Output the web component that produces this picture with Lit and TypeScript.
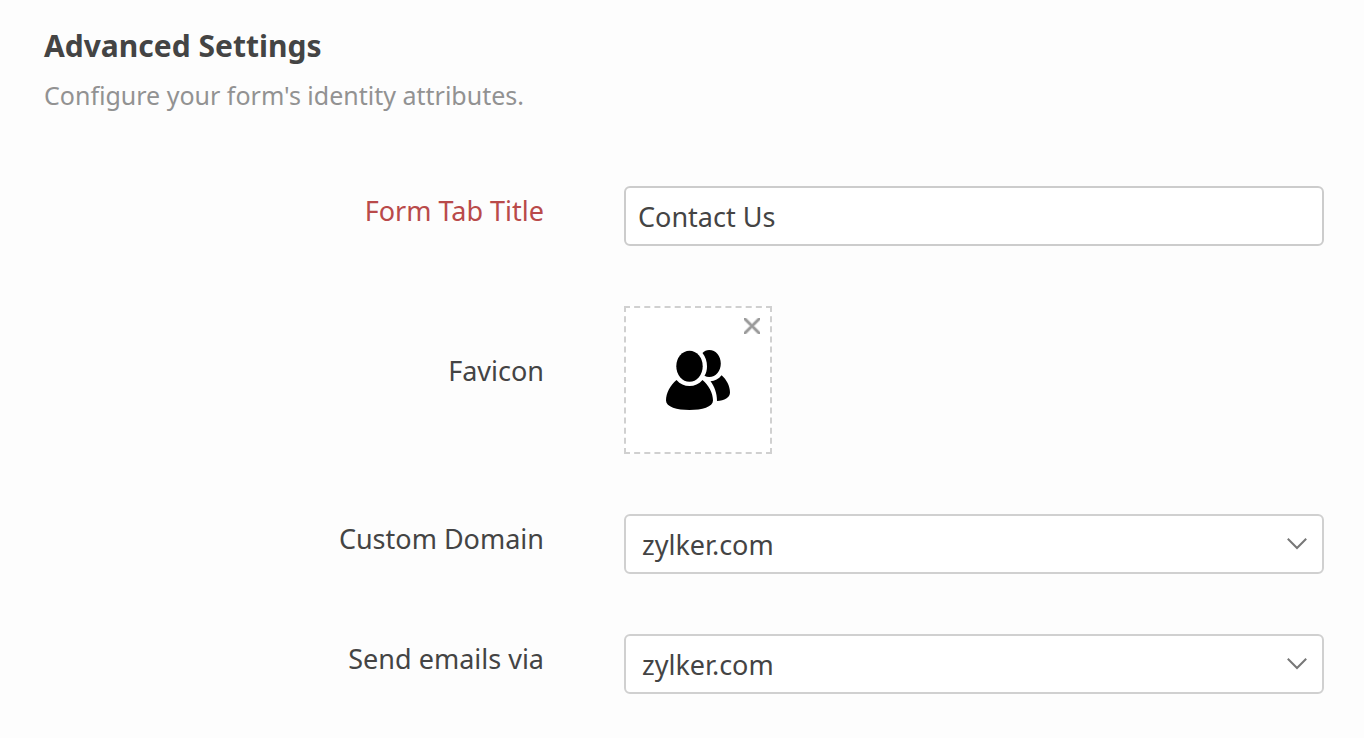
import { LitElement, html, css } from "lit";
import { customElement, property } from "lit/decorators.js";

@customElement("domain-select")
class DomainSelect extends LitElement {
  @property() label = "";
  @property() name = "";
  @property({ attribute: false }) options: string[] = [];

  static styles = css`
    :host {
      display: contents;
    }
    .label {
      line-height: 50px;
      text-align: right;
      color: #444;
    }
    .select-box {
      display: grid;
      align-items: center;
    }
    .select {
      grid-area: 1 / 1;
      box-sizing: border-box;
      width: 100%;
      height: 60px;
      margin: 0;
      padding: 0 60px 0 16px;
      appearance: none;
      border: 2px solid #d0d0d0;
      border-radius: 6px;
      background: #fff;
      color: #444;
      font: inherit;
    }
    .chevron {
      grid-area: 1 / 1;
      justify-self: end;
      width: 22px;
      height: 14px;
      margin-right: 16px;
      pointer-events: none;
    }
  `;

  render() {
    return html`
      <label class="label" for=${this.name}>${this.label}</label>
      <div class="select-box">
        <select class="select" id=${this.name} name=${this.name}>
          ${this.options.map((o) => html`<option>${o}</option>`)}
        </select>
        <svg class="chevron" viewBox="0 0 22 14" aria-hidden="true">
          <path d="M1.8 1.8 11 11 20.2 1.8" fill="none" stroke="#777" stroke-width="2" />
        </svg>
      </div>
    `;
  }
}

@customElement("app-root")
class AppRoot extends LitElement {
  static styles = css`
    :host {
      display: block;
      box-sizing: border-box;
      min-height: 100vh;
      padding: 24px 40px 44px 44px;
      background: #fdfdfd;
      color: #444;
      font-family: "Noto Sans", sans-serif;
      font-size: 27px;
    }
    .title {
      margin: 0;
      font-size: 30px;
      font-weight: 700;
      line-height: 44px;
    }
    .intro {
      margin: 7px 0 71px;
      font-size: 25px;
      line-height: 40px;
      color: #929292;
    }
    .form {
      display: grid;
      grid-template-columns: 5fr 7fr;
      gap: 60px 80px;
    }
    .label {
      line-height: 50px;
      text-align: right;
    }
    .label.required {
      color: #b94a4a;
    }
    .label.tall {
      padding-top: 40px;
    }
    .input {
      box-sizing: border-box;
      width: 100%;
      height: 60px;
      padding: 0 12px;
      border: 2px solid #ccc;
      border-radius: 6px;
      background: #fff;
      color: #444;
      font: inherit;
    }
    .favicon {
      position: relative;
      display: grid;
      place-items: center;
      box-sizing: border-box;
      width: 148px;
      height: 148px;
      border: 2px dashed #d0d0d0;
      background: #fff;
    }
    .people {
      width: 64px;
      height: 60px;
    }
    .remove {
      position: absolute;
      top: 8px;
      right: 8px;
      display: flex;
      padding: 2px;
      border: 0;
      background: none;
    }
    .cross {
      width: 16px;
      height: 16px;
    }
  `;

  private domains = ["zylker.com"];

  render() {
    return html`
      <h1 class="title">Advanced Settings</h1>
      <p class="intro">Configure your form's identity attributes.</p>
      <form class="form">
        <label class="label required" for="tab-title">Form Tab Title</label>
        <input class="input" id="tab-title" type="text" value="Contact Us" />

        <span class="label tall" id="favicon-label">Favicon</span>
        <div class="favicon" role="group" aria-labelledby="favicon-label">
          <svg class="people" viewBox="0 0 64 60" aria-hidden="true">
            <ellipse cx="23.5" cy="16.2" rx="13.2" ry="15.5" />
            <path d="M10.5 30C4.5 35 0 43 0 50.5 0 57 11 60 23.5 60S47 57 47 50.5C47 43 42.500 35 36.500 30 33 34 28.500 36 23.500 36S14 34 10.500 30Z" />
            <path d="M36.500 3C38.300 1 40.500 0 43.200 0 50 0 54.800 6 54.800 13.500S50 27 43.200 27C41.500 27 40 26.600 38.500 25.800 40.200 23 41 20 41 16.500 41 11.500 39.500 6.500 36.500 3Z" />
            <path d="M55.600 25.200C60.500 29.500 64 36 64 42.500 64 47.500 58.500 50.700 51 51 51 43 48.500 36.500 44.500 31.200 48.800 31 52.800 29 55.600 25.200Z" />
          </svg>
          <button class="remove" type="button" aria-label="Remove favicon">
            <svg class="cross" viewBox="0 0 16 16" aria-hidden="true">
              <path d="M0 0 16 16M16 0 0 16" fill="none" stroke="#d0d0d0" stroke-width="4" />
              <path d="M0 0 16 16M16 0 0 16" fill="none" stroke="#999" stroke-width="2" />
            </svg>
          </button>
        </div>

        <domain-select label="Custom Domain" name="custom-domain" .options=${this.domains}></domain-select>
        <domain-select label="Send emails via" name="send-via" .options=${this.domains}></domain-select>
      </form>
    `;
  }
}
